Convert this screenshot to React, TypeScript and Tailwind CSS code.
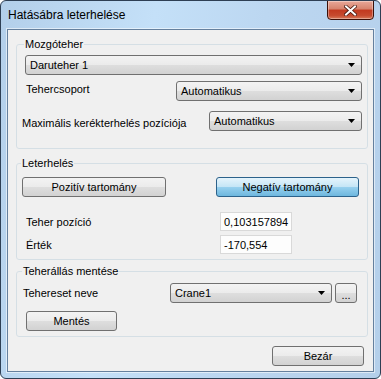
import React from "react"

function Arrow() {
    return (
        <svg width="7" height="4" viewBox="0 0 7 4" className="shrink-0">
            <path d="M0 0h7L3.5 4z" fill="#000" />
        </svg>
    )
}

function Combo({ value, className }: { value: string; className: string }) {
    return (
        <div className={`h-[20px] flex items-center justify-between rounded-[3px] border border-[#707070] bg-[linear-gradient(#f3f3f3_0%,#ebebeb_50%,#dedede_50%,#d2d2d2_100%)] pl-[4px] pr-[6px] ${className}`}>
            <span>{value}</span>
            <Arrow />
        </div>
    )
}

function Btn({ label, className }: { label: string; className: string }) {
    return (
        <div className={`h-[20px] flex items-center justify-center rounded-[3px] border border-[#707070] bg-[linear-gradient(#f3f3f3_0%,#ebebeb_50%,#dedede_50%,#d2d2d2_100%)] ${className}`}>
            {label}
        </div>
    )
}

function Field({ value }: { value: string }) {
    return (
        <div className="h-[19px] w-[72px] flex items-center border border-[#d9d9d9] bg-[#fdfdfd] pl-[3px]">
            {value}
        </div>
    )
}

export default function App() {
    return (
        <div className="w-[381px] h-[379px] flex flex-col rounded-[6px] border border-[#2e3f54] bg-[linear-gradient(100deg,#b3cfea_0%,#c4e0f8_35%,#bcd7f1_60%,#b4cfea_100%)] text-[11px] leading-[14px] text-black font-['Liberation_Sans',Arial,sans-serif] overflow-hidden">
            {/* title bar */}
            <div className="h-[28px] shrink-0 flex items-start justify-between">
                <span className="pl-[7px] mt-[7px] text-[12px] leading-[15px]">Hatásábra leterhelése</span>
                <div className="-mt-px mr-[6px] w-[47px] h-[20px] flex items-center justify-center rounded-b-[4px] border border-[#3b1008] bg-[linear-gradient(#e9a899_0%,#d6826c_45%,#c2391f_50%,#c64a2e_80%,#d77a5a_100%)] shadow-[inset_0_0_0_1px_rgba(255,255,255,0.35)]">
                    <svg width="13" height="11" viewBox="0 0 13 11">
                        <path d="M2 1.5l9 8M11 1.5l-9 8" stroke="#4a1a10" strokeWidth="3.6" strokeLinecap="square" />
                        <path d="M2 1.5l9 8M11 1.5l-9 8" stroke="#fff" strokeWidth="2" strokeLinecap="square" />
                    </svg>
                </div>
            </div>

            {/* client area */}
            <div className="flex-1 mx-[6px] mb-[6px] border border-[#65809e] shadow-[0_0_0_1px_rgba(255,255,255,0.55)] bg-[#f0f0f0] pl-[8px] pr-[5px] pt-[7px] flex flex-col">
                <fieldset className="border border-[#d5dfe5] rounded-[3px] pl-[8px] pr-[5px] pb-[17px]">
                    <legend className="px-[1px] -ml-[1px] leading-[14px]">Mozgóteher</legend>
                    <Combo value="Daruteher 1" className="mt-[4px] w-full" />
                    <div className="mt-[6px] flex items-center justify-between">
                        <span className="pl-[1px] -mt-[4px]">Tehercsoport</span>
                        <Combo value="Automatikus" className="w-[186px]" />
                    </div>
                    <div className="mt-[10px] flex items-center justify-between">
                        <span className="-ml-[3px] mt-[3px]">Maximális kerékterhelés pozíciója</span>
                        <Combo value="Automatikus" className="w-[153px]" />
                    </div>
                </fieldset>

                <fieldset className="mt-[7px] border border-[#d5dfe5] rounded-[3px] pl-[5px] pr-[8px] pb-[5px]">
                    <legend className="px-[1px] -ml-[1px] leading-[14px]">Leterhelés</legend>
                    <div className="mt-[7px] flex justify-between">
                        <Btn label="Pozitív tartomány" className="w-[144px]" />
                        <div className="w-[143px] h-[20px] flex items-center justify-center rounded-[3px] border border-[#2c628b] bg-[linear-gradient(#e5f4fc_0%,#c4e5f6_50%,#98d1ef_50%,#6eb7de_100%)]">
                            Negatív tartomány
                        </div>
                    </div>
                    <div className="mt-[15px] flex items-center">
                        <span className="w-[198px] pl-[4px]">Teher pozíció</span>
                        <Field value="0,103157894" />
                    </div>
                    <div className="mt-[4px] flex items-center">
                        <span className="w-[198px] pl-[4px]">Érték</span>
                        <Field value="-170,554" />
                    </div>
                </fieldset>

                <fieldset className="mt-[4px] border border-[#d5dfe5] rounded-[3px] pl-[6px] pr-[9px] pb-[5px]">
                    <legend className="px-[1px] -ml-[1px] leading-[14px]">Teherállás mentése</legend>
                    <div className="mt-[5px] flex items-center">
                        <span className="w-[147px]">Tehereset neve</span>
                        <Combo value="Crane1" className="w-[162px]" />
                        <div className="ml-[3px] w-[22px] h-[20px] flex items-end justify-center pb-[3px] rounded-[3px] border border-[#707070] bg-[linear-gradient(#f3f3f3_0%,#ebebeb_50%,#dedede_50%,#d2d2d2_100%)] leading-[8px]">
                            ...
                        </div>
                    </div>
                    <Btn label="Mentés" className="mt-[8px] ml-[3px] w-[91px]" />
                </fieldset>

                <div className="mt-[9px] flex justify-end pr-[4px]">
                    <Btn label="Bezár" className="w-[92px]" />
                </div>
            </div>
        </div>
    )
}
